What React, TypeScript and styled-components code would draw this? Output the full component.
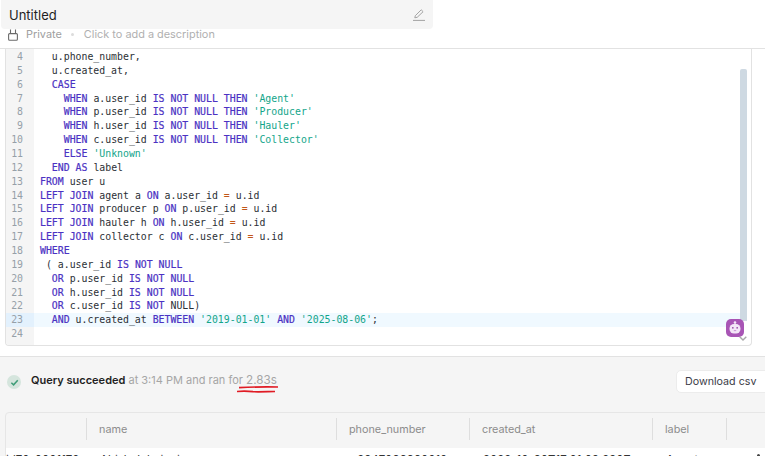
import { createGlobalStyle } from "styled-components"
import styled from "styled-components"

const kw = new Set([
  "CASE", "WHEN", "IS", "NOT", "NULL", "THEN", "ELSE", "END", "AS", "FROM",
  "LEFT", "JOIN", "ON", "WHERE", "OR", "AND", "BETWEEN",
])

const sql = [
  "  u.phone_number,",
  "  u.created_at,",
  "  CASE",
  "    WHEN a.user_id IS NOT NULL THEN 'Agent'",
  "    WHEN p.user_id IS NOT NULL THEN 'Producer'",
  "    WHEN h.user_id IS NOT NULL THEN 'Hauler'",
  "    WHEN c.user_id IS NOT NULL THEN 'Collector'",
  "    ELSE 'Unknown'",
  "  END AS label",
  "FROM user u",
  "LEFT JOIN agent a ON a.user_id = u.id",
  "LEFT JOIN producer p ON p.user_id = u.id",
  "LEFT JOIN hauler h ON h.user_id = u.id",
  "LEFT JOIN collector c ON c.user_id = u.id",
  "WHERE",
  " ( a.user_id IS NOT NULL",
  "  OR p.user_id IS NOT NULL",
  "  OR h.user_id IS NOT NULL",
  "  OR c.user_id IS NOT NULL)",
  "  AND u.created_at BETWEEN '2019-01-01' AND '2025-08-06';",
  "",
]

const tokenize = (line: string) =>
  line.split(/('[^']*'|\s+|=)/).map((part, i) => {
    if (part.startsWith("'")) return <Str key={i}>{part}</Str>
    if (part === "=") return <Op key={i}>{part}</Op>
    if (kw.has(part)) return <Kw key={i}>{part}</Kw>
    return part
  })

export default function App() {
  return (
    <Page>
      <Global />
      <Header>
        <TitleBox>
          <Title>Untitled</Title>
          <svg width="12" height="12" viewBox="0 0 12 12" fill="none" stroke="#a3a3a3" strokeWidth="1">
            <path d="M1.8 8.8 2.3 6.7 8.2.8l1.9 1.9-5.9 5.6z" />
            <path d="M0 11.4h12" />
          </svg>
        </TitleBox>
        <Meta>
          <svg width="10" height="12" viewBox="0 0 10 12" fill="none" stroke="#6b6b6b" strokeWidth="1.1">
            <rect x=".6" y="4.6" width="8.8" height="6.6" rx="1" />
            <path d="M2.5 4.6V.5M7.5 4.6V.5" />
          </svg>
          <Private>Private</Private>
          <Dot />
          <span>Click to add a description</span>
        </Meta>
      </Header>

      <EditorArea>
        <Editor>
          <Gutter>
            {sql.map((_, i) => (
              <LineNo key={i} $active={i + 4 === 23}>{i + 4}</LineNo>
            ))}
          </Gutter>
          <Code>
            {sql.map((line, i) => (
              <CodeLine key={i} $active={i + 4 === 23}>{tokenize(line)}</CodeLine>
            ))}
          </Code>
          <ScrollThumb />
          <BotBadge>
            <svg width="14" height="14" viewBox="0 0 14 14">
              <circle cx="7" cy="1.6" r="1.3" fill="#f3e6f7" />
              <rect x="1.5" y="3" width="11" height="9.5" rx="4.5" fill="#f3e6f7" />
              <rect x="4" y="6.2" width="1.6" height="1.3" fill="#8f3fa0" />
              <rect x="8.4" y="6.2" width="1.6" height="1.3" fill="#8f3fa0" />
              <rect x="5.8" y="9.2" width="2.4" height=".9" fill="#c48ad0" />
            </svg>
          </BotBadge>
          <ScrollArrow viewBox="0 0 8 5" fill="none" stroke="#a8a8a8" strokeWidth="1.4">
            <path d="M.7.7 4 4l3.3-3.3" />
          </ScrollArrow>
        </Editor>
      </EditorArea>

      <Results>
        <StatusRow>
          <Status>
            <CheckBadge>
              <svg width="9" height="9" viewBox="0 0 10 10" fill="none" stroke="#3f9d78" strokeWidth="1.7">
                <path d="M1.5 5.3 4 7.6l4.6-5" />
              </svg>
            </CheckBadge>
            <StatusText>
              <strong>Query succeeded</strong> at 3:14 PM and ran for{" "}
              <Duration>
                2.83s
                <Scribble viewBox="0 0 42 8" fill="none" stroke="#e01b24" strokeWidth="1.7">
                  <path d="M2 1.6c12-.6 28-.8 39-.6" />
                  <path d="M0 5.5c6-.6 10-.6 16 .2 8 .3 16-.2 22-.2" />
                </Scribble>
              </Duration>
            </StatusText>
          </Status>
          <DownloadButton>Download csv</DownloadButton>
        </StatusRow>

        <Table>
          <HeadRow>
            <Cell $width={81} />
            <Cell $width={250}>name</Cell>
            <Cell $width={133}>phone_number</Cell>
            <Cell $width={183}>created_at</Cell>
            <Cell $width={74}>label</Cell>
            <Cell $width={40} />
          </HeadRow>
          <BodyRow>
            <BodyCell $width={81} $clip>id70-0001178</BodyCell>
            <BodyCell $width={250}>Abishek bajpai</BodyCell>
            <BodyCell $width={133}>+2347066660010</BodyCell>
            <BodyCell $width={183}>2022-10-30T17:01:09.290Z</BodyCell>
            <BodyCell $width={74}>Agent</BodyCell>
            <RowMark />
          </BodyRow>
        </Table>
      </Results>
    </Page>
  )
}

const Global = createGlobalStyle`
  html, body {
    margin: 0;
    height: 100%;
    overflow: hidden;
    background: #fff;
    font-family: Inter, "Liberation Sans", sans-serif;
  }
`

const Page = styled.div`
  width: 765px;
  height: 456px;
  overflow: hidden;
  display: flex;
  flex-direction: column;
`

const Header = styled.header`
  height: 49px;
  flex: none;
  box-sizing: border-box;
  padding-left: 1px;
  background: #fff;
  border-bottom: 1px solid #e2e2e2;
`

const TitleBox = styled.div`
  width: 432px;
  height: 29px;
  box-sizing: border-box;
  padding: 0 8px;
  display: flex;
  align-items: center;
  justify-content: space-between;
  background: #f5f5f5;
  border-radius: 0 0 4px 4px;
`

const Title = styled.div`
  font-size: 13px;
  color: #1f1f1f;
`

const Meta = styled.div`
  display: flex;
  align-items: center;
  gap: 8px;
  padding-left: 7px;
  height: 10px;
  font-size: 10.9px;
  color: #b0b0b0;

  svg {
    margin-top: 2px;
  }
`

const Private = styled.span`
  color: #a0a0a0;
`

const Dot = styled.span`
  width: 3px;
  height: 3px;
  margin: 0 2px 0 1px;
  border-radius: 50%;
  background: #dcdcdc;
`

const EditorArea = styled.div`
  height: 308px;
  flex: none;
  box-sizing: border-box;
  padding: 0 13px 10px 5px;
  background: #fff;
  border-bottom: 1px solid #e2e2e2;
`

const Editor = styled.div`
  position: relative;
  height: 100%;
  box-sizing: border-box;
  display: flex;
  overflow: hidden;
  border: 1px solid #e2e2e2;
  border-top: none;
  border-radius: 0 0 4px 4px;
  font-family: "DejaVu Sans Mono", monospace;
  font-size: 9.85px;
  line-height: 13.86px;
`

const Gutter = styled.div`
  width: 28px;
  flex: none;
  padding-top: 1px;
  background: #f5f5f5;
`

const LineNo = styled.div<{ $active?: boolean }>`
  padding-right: 11px;
  text-align: right;
  color: #96a0a8;
  background: ${p => (p.$active ? "#e3f1fd" : "transparent")};
`

const Code = styled.div`
  flex: 1;
  padding-top: 1px;
  color: #2b2f35;
`

const CodeLine = styled.div<{ $active?: boolean }>`
  height: 13.86px;
  width: 702px;
  padding-left: 6px;
  white-space: pre;
  background: ${p => (p.$active ? "#f0f9ff" : "transparent")};
`

const Kw = styled.span`
  color: #4b32c3;
  -webkit-text-stroke: 0.2px #4b32c3;
`

const Str = styled.span`
  color: #12a58a;
`

const Op = styled.span`
  color: #c2571a;
`

const ScrollThumb = styled.div`
  position: absolute;
  top: 20px;
  right: 4px;
  width: 7px;
  height: 252px;
  border-radius: 2px 2px 0 0;
  background: #ced9e2;
`

const BotBadge = styled.div`
  position: absolute;
  top: 270px;
  right: 7px;
  width: 18px;
  height: 18px;
  display: flex;
  align-items: center;
  justify-content: center;
  border-radius: 5px;
  background: #a855b5;
`

const ScrollArrow = styled.svg`
  position: absolute;
  top: 287px;
  right: 4px;
  width: 8px;
  height: 5px;
`

const Results = styled.div`
  flex: 1;
  min-height: 0;
  background: #f5f5f5;
  padding: 11px 0 0 5px;
`

const StatusRow = styled.div`
  display: flex;
  align-items: center;
  justify-content: space-between;
  height: 24px;
`

const Status = styled.div`
  display: flex;
  align-items: center;
  gap: 10px;
  padding-left: 2px;
`

const CheckBadge = styled.span`
  width: 14px;
  height: 14px;
  margin-top: 4px;
  display: flex;
  align-items: center;
  justify-content: center;
  border-radius: 50%;
  background: #d5e5dd;
`

const StatusText = styled.div`
  font-size: 11px;
  color: #a6a6a6;

  strong {
    font-weight: 600;
    color: #1f1f1f;
  }
`

const Duration = styled.span`
  position: relative;
  font-size: 11.7px;
`

const Scribble = styled.svg`
  position: absolute;
  left: -9px;
  top: 13px;
  width: 42px;
  height: 8px;
`

const DownloadButton = styled.button`
  width: 100px;
  height: 23px;
  box-sizing: border-box;
  margin: 3px -11px 0 0;
  padding: 0 0 0 8px;
  text-align: left;
  font: 10.7px Inter, "Liberation Sans", sans-serif;
  color: #3c3c48;
  background: #fff;
  border: 1px solid #ececec;
  border-radius: 5px;
`

const Table = styled.div`
  margin-top: 20px;
  width: 780px;
  height: 60px;
  border: 1px solid #e6e6e6;
  border-radius: 4px 0 0 0;
`

const HeadRow = styled.div`
  display: flex;
  align-items: center;
  box-sizing: border-box;
  height: 35px;
  padding-bottom: 3px;
`

const Cell = styled.div<{ $width: number }>`
  width: ${p => p.$width}px;
  height: 22px;
  flex: none;
  box-sizing: border-box;
  padding-left: 12px;
  display: flex;
  align-items: center;
  font-size: 10.8px;
  color: #8c8c8c;
  border-right: 1px solid #dedede;
`

const BodyRow = styled.div`
  display: flex;
  height: 24px;
  background: #fff;
`

const BodyCell = styled.div<{ $width: number; $clip?: boolean }>`
  width: ${p => p.$width}px;
  flex: none;
  box-sizing: border-box;
  padding-top: 5px;
  padding-left: ${p => (p.$clip ? "0" : "13px")};
  font-size: 11.5px;
  color: #333;
  white-space: nowrap;
  overflow: hidden;
`

const RowMark = styled.span`
  width: 3px;
  height: 3px;
  margin: 6px 0 0 30px;
  border-radius: 50%;
  background: #444;
`
